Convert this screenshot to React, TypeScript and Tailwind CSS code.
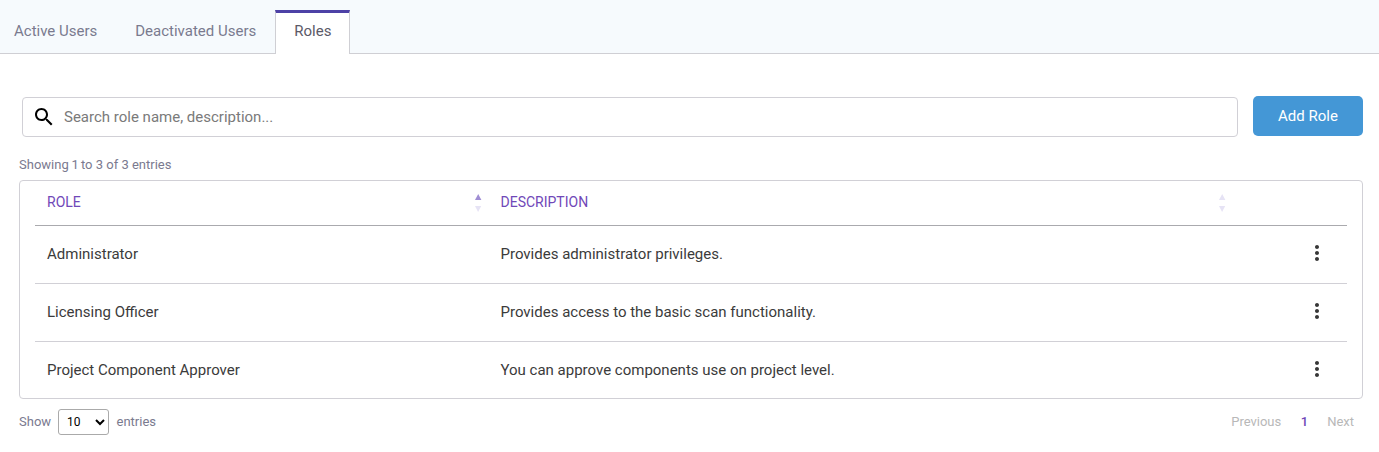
import React from "react";

const roles = [
  { name: "Administrator", description: "Provides administrator privileges." },
  { name: "Licensing Officer", description: "Provides access to the basic scan functionality." },
  { name: "Project Component Approver", description: "You can approve components use on project level." },
];

function SortArrows({ ascending = false }: { ascending?: boolean }) {
  return (
    <svg width="7" height="18" viewBox="0 0 7 18" className="mt-[13px] -mr-px block">
      <path d="M3.2 0L6.4 6H0Z" fill={ascending ? "#a08ed4" : "#e6e3f5"} />
      <path d="M0 12H6.2L3.1 18Z" fill="#e6e3f5" />
    </svg>
  );
}

function Tabs() {
  return (
    <nav className="flex h-[54px] items-stretch bg-[#f6fafd] pt-[10px] text-[15px] leading-[22px] text-[#7a7a8f]">
      <div className="w-[116px] border-b border-[#cfcfd4] pt-[10px] pl-[14px]">Active Users</div>
      <div className="w-[159px] border-b border-[#cfcfd4] pt-[10px] pl-[19.25px]">Deactivated Users</div>
      <div className="w-[75px] border-x border-t-[3px] border-x-[#cfcfd4] border-t-[#4d41a6] bg-white pt-[7px] pl-[18.25px] text-[#5b5a68]">
        Roles
      </div>
      <div className="flex-1 border-b border-[#cfcfd4]" />
    </nav>
  );
}

function Toolbar() {
  return (
    <div className="mt-[42px] flex pr-4 pl-[22px]">
      <label className="mt-px flex h-10 w-[1216px] items-center rounded border border-[#d1d0d6] pl-[9px]">
        <svg width="24" height="24" viewBox="0 0 24 24" fill="#000">
          <path d="M15.5 14h-.79l-.28-.27C15.41 12.59 16 11.11 16 9.5 16 5.91 13.09 3 9.5 3S3 5.91 3 9.5 5.91 16 9.5 16c1.61 0 3.09-.59 4.23-1.57l.27.28v.79l5 4.99L20.49 19l-4.99-5zm-6 0C7.01 14 5 11.99 5 9.5S7.01 5 9.5 5 14 7.01 14 9.5 11.99 14 9.5 14z" />
        </svg>
        <input
          className="ml-2 flex-1 bg-transparent text-[15px] outline-none placeholder:text-[#7a7a7a]"
          placeholder="Search role name, description..."
        />
      </label>
      <button className="ml-[15px] h-10 w-[110px] rounded-[5px] bg-[#4497d6] text-[15px] text-white">Add Role</button>
    </div>
  );
}

function RolesTable() {
  return (
    <div className="mt-[5px] mr-4 ml-[19px] h-[219px] rounded border border-[#d1d0d6] px-[15px]">
      <div className="flex h-[45px] border-b border-[#aaaaae] text-sm leading-5 text-[#7048b8]">
        <div className="w-[440px] pt-[11px] pl-3">ROLE</div>
        <SortArrows ascending />
        <div className="w-[737.5px] pt-[11px] pl-[19.5px]">DESCRIPTION</div>
        <SortArrows />
      </div>
      {roles.map((role) => (
        <div
          key={role.name}
          className="flex h-[58px] border-b border-[#d1d0d6] text-[15px] leading-[22px] text-[#3b3b3b] last:h-[57px] last:border-b-0"
        >
          <div className="w-[453.5px] shrink-0 pt-[17px] pl-3">{role.name}</div>
          <div className="flex-1 pt-[17px] pl-3">{role.description}</div>
          <svg width="24" height="24" viewBox="0 0 24 24" fill="#373737" className="mt-[15px] mr-[18px]">
            <path d="M12 8c1.1 0 2-.9 2-2s-.9-2-2-2-2 .9-2 2 .9 2 2 2zm0 2c-1.1 0-2 .9-2 2s.9 2 2 2 2-.9 2-2-.9-2-2-2zm0 6c-1.1 0-2 .9-2 2s.9 2 2 2 2-.9 2-2-.9-2-2-2z" />
          </svg>
        </div>
      ))}
    </div>
  );
}

function Footer() {
  return (
    <div className="mt-[10px] flex h-[26px] items-center pr-[25px] pl-[19px] text-[13px] text-[#7a7a8f]">
      <span className="w-[39px]">Show</span>
      <select className="mr-[7.5px] h-[26px] w-[51px] rounded-[3px] border border-[#aaa] bg-transparent p-1 text-[12px] text-black">
        <option>10</option>
      </select>
      <span>entries</span>
      <span className="ml-auto text-[#b8b8b8]">Previous</span>
      <span className="ml-[19.5px] font-medium text-[#7048b8]">1</span>
      <span className="ml-[19px] text-[#b8b8b8]">Next</span>
    </div>
  );
}

export default function App() {
  return (
    <main className="h-[452px] w-full overflow-hidden bg-white font-[Roboto,sans-serif]">
      <Tabs />
      <Toolbar />
      <div className="mt-[18px] ml-[19px] h-5 text-[13px] leading-5 text-[#7a7a8f]">
        Showing<span className="-ml-[0.5px]"> 1</span>
        <span className="-ml-px"> to 3 of 3 entries</span>
      </div>
      <RolesTable />
      <Footer />
    </main>
  );
}
